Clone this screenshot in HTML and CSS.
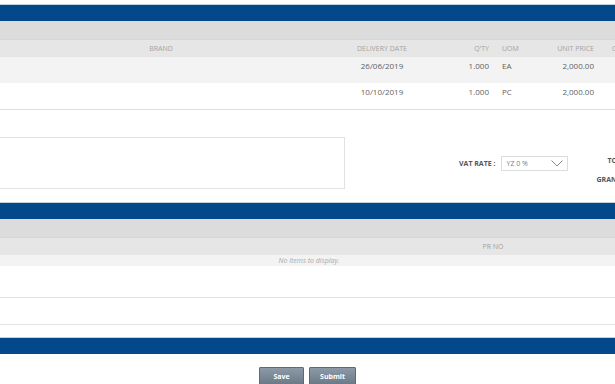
FILE: index.html
```html
<!DOCTYPE html>
<html lang="en">
<head>
  <meta charset="UTF-8">
  <title>Purchase Order</title>
  <link rel="stylesheet" href="styles.css">
</head>
<body>
  <div class="page">
    <div class="band"></div>
    <div class="grid items">
      <div class="group-bar"></div>
      <div class="row head">
        <span class="c-brand">BRAND</span>
        <span class="c-date">DELIVERY DATE</span>
        <span class="c-qty">Q'TY</span>
        <span class="c-uom">UOM</span>
        <span class="c-price">UNIT PRICE</span>
        <span class="c-cur">CURRENCY</span>
      </div>
      <div class="row alt">
        <span class="c-brand"></span>
        <span class="c-date">26/06/2019</span>
        <span class="c-qty">1.000</span>
        <span class="c-uom">EA</span>
        <span class="c-price">2,000.00</span>
        <span class="c-cur"></span>
      </div>
      <div class="row last">
        <span class="c-brand"></span>
        <span class="c-date">10/10/2019</span>
        <span class="c-qty">1.000</span>
        <span class="c-uom">PC</span>
        <span class="c-price">2,000.00</span>
        <span class="c-cur"></span>
      </div>
    </div>

    <div class="summary">
      <div class="remarks"></div>
      <div class="vat">
        <span class="lbl">VAT RATE :</span>
        <div class="select">
          <span>YZ 0 %</span>
          <svg width="12" height="7" viewBox="0 0 12 7"><path d="M0.5 0.5 L6 6 L11.5 0.5" fill="none" stroke="#8a8f96" stroke-width="1"/></svg>
        </div>
      </div>
      <div class="totals">
        <div class="lbl total">TOTAL</div>
        <div class="lbl">GRAND TOTAL</div>
      </div>
    </div>

    <div class="band"></div>
    <div class="grid pr">
      <div class="group-bar"></div>
      <div class="row head">
        <span class="c-blank"></span>
        <span class="c-prno">PR NO</span>
      </div>
      <div class="empty">No items to display.</div>
      <div class="line-row"></div>
      <div class="line-row short"></div>
    </div>

    <div class="band"></div>
    <div class="actions">
      <button class="btn">Save</button>
      <button class="btn">Submit</button>
    </div>
  </div>
</body>
</html>
```

FILE: styles.css
```css
html, body {
  margin: 0;
  padding: 0;
  overflow: hidden;
  background: #fff;
}

body {
  font-family: "Open Sans", "Liberation Sans", sans-serif;
  font-size: 8px;
  color: #444;
}

.page {
  width: 615px;
  padding-top: 4px;
}

.band {
  height: 16px;
  background: #02488b;
  border-top: 1px solid #c3d0de;
}

.group-bar {
  height: 18px;
  background: #dcdcdc;
}

.row {
  display: grid;
  grid-template-columns: 322px 120px 52px 26px 80px 80px;
  align-items: start;
  height: 26px;
  padding-top: 3px;
  line-height: 11px;
  box-sizing: border-box;
  width: 680px;
}

.row.head {
  height: 18px;
  padding-top: 0;
  align-items: center;
  background: #e6e6e6;
  border-top: 1px solid #d6d6d6;
  color: #a3a3a3;
  font-size: 7px;
}

.row.alt {
  background: #f3f3f3;
  color: #5f5f5f;
}

.row.last {
  height: 27px;
  color: #5f5f5f;
  border-bottom: 1px solid #dedede;
}

.c-brand, .c-date { text-align: center; }
.c-qty { text-align: right; padding-right: 5px; }
.c-uom { padding-left: 8px; }
.c-price { text-align: right; padding-right: 6px; }
.c-cur { padding-left: 12px; }

.summary {
  display: flex;
  align-items: flex-start;
  height: 92px;
  padding-top: 27px;
  box-sizing: border-box;
}

.remarks {
  flex: none;
  width: 351px;
  height: 52px;
  margin-left: -6px;
  border: 1px solid #e2e2e2;
  box-sizing: border-box;
}

.lbl {
  font-weight: bold;
  font-size: 7px;
  color: #555;
  white-space: nowrap;
}

.vat {
  flex: none;
  display: flex;
  align-items: center;
  margin-left: 114px;
  margin-top: 19px;
}

.select {
  display: flex;
  align-items: center;
  justify-content: space-between;
  width: 67px;
  height: 15px;
  margin-left: 5px;
  padding: 0 4px 0 5px;
  box-sizing: border-box;
  border: 1px solid #dcdcdc;
  color: #6d7f95;
  font-size: 7px;
}

.totals {
  flex: none;
  margin-left: 29px;
  margin-top: 19px;
}

.totals .lbl {
  line-height: 10px;
  margin-bottom: 9px;
}

.totals .total {
  padding-left: 11px;
}

.grid.pr .row {
  grid-template-columns: 440px 106px;
}

.c-prno { text-align: center; }

.empty {
  height: 11px;
  line-height: 11px;
  background: #f3f3f3;
  text-align: center;
  padding-left: 3px;
  font-style: italic;
  font-size: 7px;
  color: #aaa;
}

.line-row {
  height: 31px;
  border-bottom: 1px solid #e2e2e2;
}

.line-row.short {
  height: 26px;
  margin-bottom: 12px;
}

.actions {
  display: flex;
  justify-content: center;
  gap: 5px;
  padding-top: 13px;
}

.btn {
  height: 19px;
  padding: 0 10px;
  min-width: 45px;
  border: 1px solid #5c6a79;
  border-radius: 1px;
  background: linear-gradient(#8d99a6, #6a7886);
  color: #fff;
  font-family: "Open Sans", "Liberation Sans", sans-serif;
  font-weight: bold;
  font-size: 7px;
}
```
